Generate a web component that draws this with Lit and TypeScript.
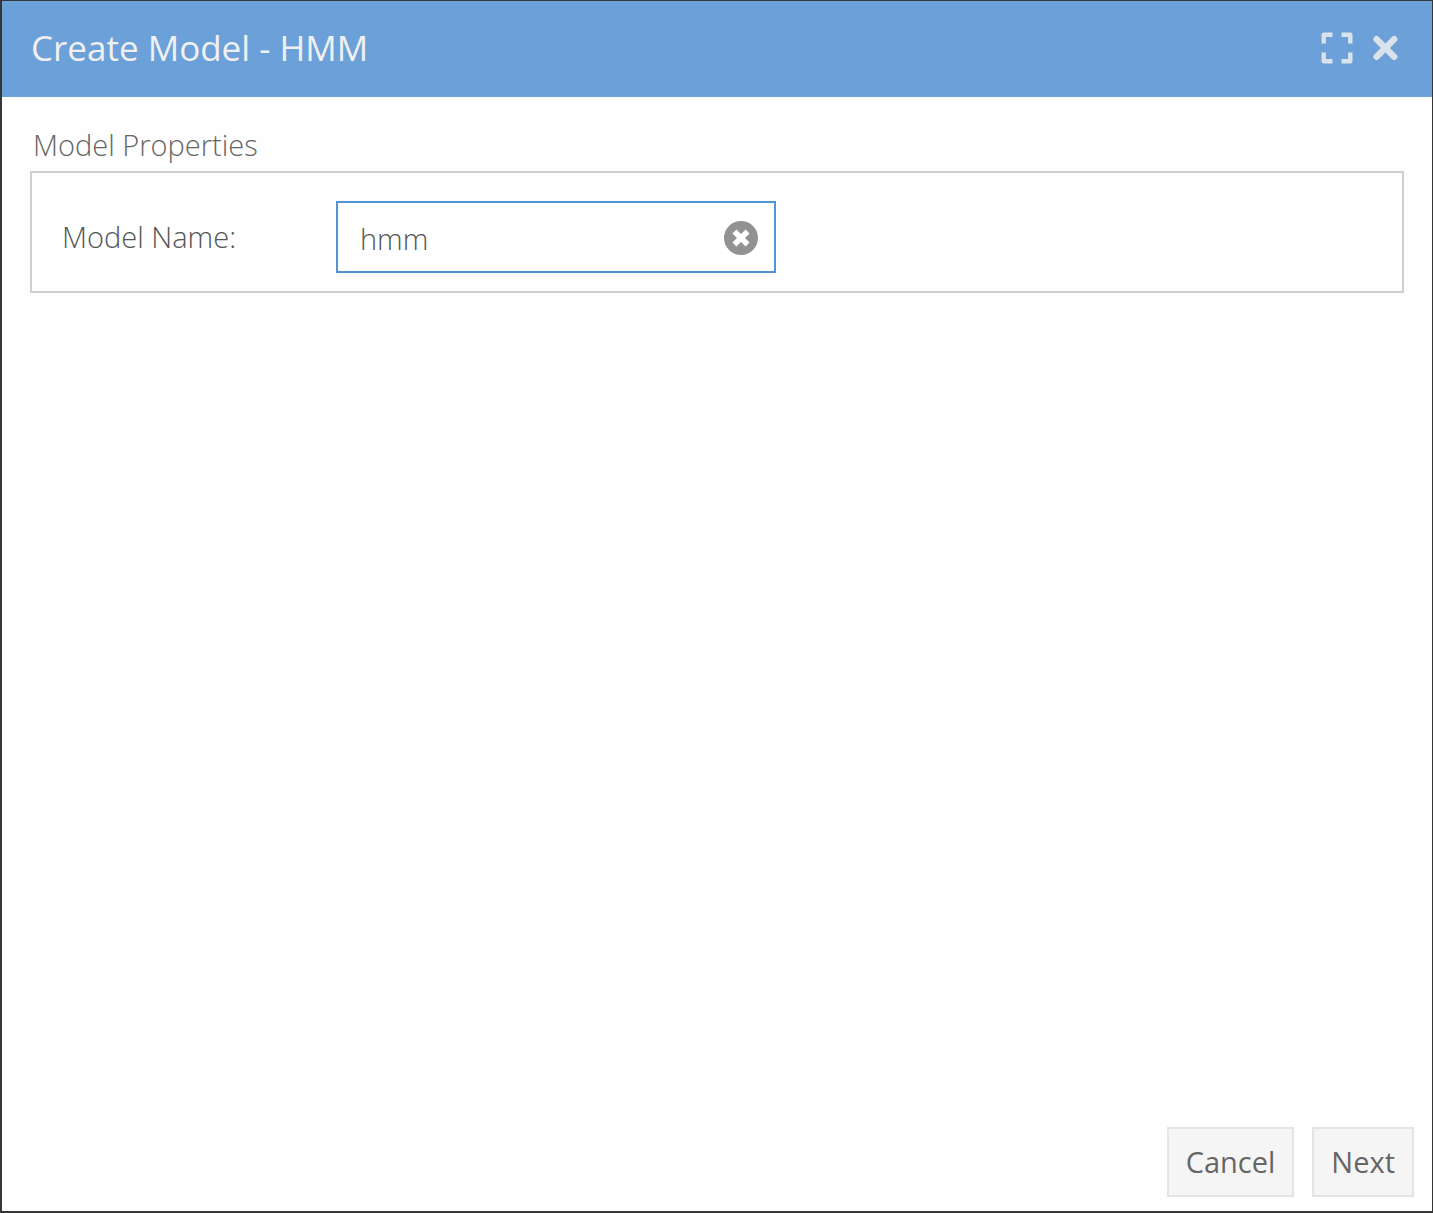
import { LitElement, html, css } from "lit";
import { customElement, state } from "lit/decorators.js";

@customElement("app-root")
export class AppRoot extends LitElement {
  @state() private name = "hmm";

  static styles = css`
    :host {
      display: block;
      font-family: "Open Sans", "Noto Sans", sans-serif;
      font-size: 29px;
      line-height: 40px;
      color: #555;
    }
    * {
      box-sizing: border-box;
    }
    button,
    input {
      font: inherit;
      color: inherit;
      margin: 0;
    }
    .dialog {
      display: flex;
      flex-direction: column;
      min-height: 100vh;
      background: #fefefe;
      border: solid #363636;
      border-width: 1px 1px 2px 2px;
    }
    .header {
      display: flex;
      align-items: center;
      height: 96px;
      padding: 0 34px 2px 29px;
      background: #6ca0d8;
      color: #f0f0f0;
    }
    .title {
      flex: 1;
      margin: 0;
      font-size: 35px;
      font-weight: 400;
      line-height: 48px;
    }
    .tools {
      display: flex;
      align-items: center;
      gap: 19px;
    }
    .icon {
      display: flex;
      padding: 0;
      border: 0;
      background: none;
      cursor: pointer;
    }
    .body {
      flex: 1;
      padding: 28px;
      font-weight: 300;
    }
    .legend {
      margin: 0 0 6px;
      padding-left: 3px;
      font-size: 29px;
      font-weight: 300;
      color: #666;
    }
    .group {
      display: flex;
      align-items: center;
      padding: 28px 30px 18px;
      border: 2px solid #d0d0d0;
    }
    .label {
      width: 274px;
    }
    .field {
      display: flex;
      align-items: center;
      width: 440px;
      height: 72px;
      padding: 2px 16px 0 22px;
      border: 2px solid #5094d6;
      background: #fff;
    }
    .input {
      flex: 1;
      min-width: 0;
      padding: 2px 0 0;
      border: 0;
      outline: 0;
      background: none;
    }
    .footer {
      display: flex;
      justify-content: flex-end;
      gap: 18px;
      padding: 14px 18px;
    }
    .button {
      height: 70px;
      padding: 0 17px;
      border: 2px solid #e4e4e4;
      background: #f5f5f5;
      color: #666;
      cursor: pointer;
    }
  `;

  render() {
    return html`
      <section class="dialog" role="dialog" aria-labelledby="title">
        <header class="header">
          <h1 class="title" id="title">Create Model - HMM</h1>
          <div class="tools">
            <button class="icon" aria-label="Maximize">
              <svg width="32" height="32" viewBox="0 0 32 32" fill="none" stroke="#dae3ec" stroke-width="4.4" stroke-linejoin="round">
                <path d="M2.7 11.5V2.7H11.5M20.5 2.7H29.3V11.5M29.3 20.5V29.3H20.5M11.5 29.3H2.7V20.5" />
              </svg>
            </button>
            <button class="icon" aria-label="Close">
              <svg width="26" height="26" viewBox="0 0 26 26" fill="none" stroke="#dae3ec" stroke-width="6.4" stroke-linecap="round">
                <path d="M4.6 4.2L22.2 21.8M22.2 4.2L4.6 21.8" />
              </svg>
            </button>
          </div>
        </header>
        <div class="body">
          <h2 class="legend">Model Properties</h2>
          <div class="group">
            <label class="label" for="name">Model Name:</label>
            <div class="field">
              <input
                class="input"
                id="name"
                type="text"
                .value=${this.name}
                @input=${(e: Event) => (this.name = (e.target as HTMLInputElement).value)}
              />
              <button class="icon" aria-label="Clear" @click=${() => (this.name = "")}>
                <svg width="34" height="34" viewBox="0 0 34 34">
                  <circle cx="17" cy="17" r="17" fill="#929292" />
                  <path d="M10.4 10.4L23.6 23.6M23.6 10.4L10.4 23.6" stroke="#fff" stroke-width="5.6" />
                </svg>
              </button>
            </div>
          </div>
        </div>
        <footer class="footer">
          <button class="button">Cancel</button>
          <button class="button">Next</button>
        </footer>
      </section>
    `;
  }
}
